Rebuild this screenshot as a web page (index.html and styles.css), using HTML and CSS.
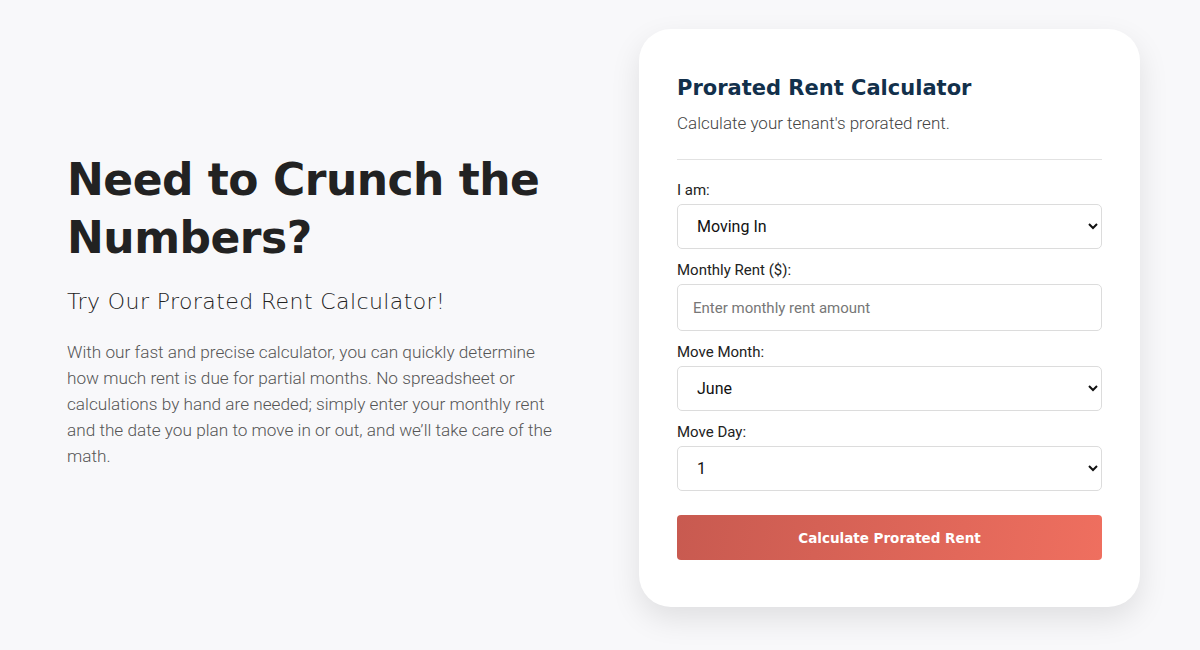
FILE: index.html
```html
<!DOCTYPE html>
<html lang="en">
<head>
<meta charset="utf-8">
<title>Prorated Rent Calculator</title>
<link rel="stylesheet" href="styles.css">
</head>
<body>
<main class="page">
  <section class="intro">
    <h1 class="intro-title">Need to Crunch the Numbers?</h1>
    <h2 class="intro-sub">Try Our Prorated Rent Calculator!</h2>
    <p class="intro-text">With our fast and precise calculator, you can quickly determine how much rent is due for partial months. No spreadsheet or calculations by hand are needed; simply enter your monthly rent and the date you plan to move in or out, and we’ll take care of the math.</p>
  </section>
  <section class="card">
    <h3 class="card-title">Prorated Rent Calculator</h3>
    <p class="card-sub">Calculate your tenant's prorated rent.</p>
    <hr class="divider">
    <form class="form">
      <div class="field">
        <label class="label" for="who">I am:</label>
        <select class="control" id="who">
          <option>Moving In</option>
          <option>Moving Out</option>
        </select>
      </div>
      <div class="field">
        <label class="label" for="rent">Monthly Rent ($):</label>
        <input class="control control-input" id="rent" type="text" placeholder="Enter monthly rent amount">
      </div>
      <div class="field">
        <label class="label" for="month">Move Month:</label>
        <select class="control" id="month">
          <option>June</option>
        </select>
      </div>
      <div class="field">
        <label class="label" for="day">Move Day:</label>
        <select class="control" id="day">
          <option>1</option>
        </select>
      </div>
      <button class="btn" type="button">Calculate Prorated Rent</button>
    </form>
  </section>
</main>
</body>
</html>
```
FILE: styles.css
```css
* { box-sizing: border-box; }
html, body { margin: 0; padding: 0; }
body {
  background: #f8f8fa;
  font-family: Roboto, "Liberation Sans", sans-serif;
  color: #222;
  width: 1200px;
  height: 650px;
  overflow: hidden;
}
.page {
  display: flex;
  align-items: flex-start;
  justify-content: space-between;
  padding: 29px 60px 0 67px;
}
.intro {
  width: 492px;
  margin-top: 122px;
}
.intro-title {
  font-family: "DejaVu Sans", sans-serif;
  font-weight: 700;
  font-size: 44px;
  line-height: 58px;
  letter-spacing: -0.5px;
  color: #222;
  margin: 0 0 20px;
}
.intro-sub {
  font-family: "DejaVu Sans", sans-serif;
  font-weight: 300;
  font-size: 22px;
  line-height: 30px;
  letter-spacing: 0.4px;
  color: #222;
  margin: 0 0 22px;
}
.intro-text {
  font-family: Roboto, sans-serif;
  font-weight: 300;
  font-size: 17.2px;
  line-height: 26px;
  color: #555;
  margin: 0;
}
.card {
  width: 501px;
  background: #fff;
  border-radius: 32px;
  box-shadow: 0 12px 30px rgba(0,0,0,0.10);
  padding: 44px 38px 47px;
}
.card-title {
  font-family: "DejaVu Sans", sans-serif;
  font-weight: 700;
  font-size: 21px;
  line-height: 30px;
  color: #12304b;
  margin: 0 0 9px;
}
.card-sub {
  font-family: Roboto, sans-serif;
  font-weight: 300;
  font-size: 17px;
  line-height: 22px;
  color: #444;
  margin: 0 0 25px;
}
.divider {
  border: 0;
  border-top: 1px solid #e2e2e2;
  margin: 0 0 20px;
}
.form {
  display: flex;
  flex-direction: column;
}
.field {
  display: flex;
  flex-direction: column;
  margin-bottom: 11px;
}
.label {
  font-family: Roboto, sans-serif;
  font-size: 15px;
  line-height: 20px;
  color: #222;
  margin-bottom: 4px;
}
.control {
  height: 45px;
  width: 100%;
  border: 1px solid #dcdcdc;
  border-radius: 5px;
  background: #fff;
  font-family: Roboto, sans-serif;
  font-size: 16px;
  color: #111;
  padding: 0 12px 0 15px;
}
.control-input {
  height: 47px;
  font-size: 15px;
}
.control-input::placeholder { color: #777; }
.btn {
  margin-top: 13px;
  height: 45px;
  border: 0;
  border-radius: 4px;
  background: linear-gradient(100deg, #c85a50, #ef6f5f);
  color: #fff;
  font-family: "DejaVu Sans", sans-serif;
  font-weight: 700;
  font-size: 13.5px;
}
```
